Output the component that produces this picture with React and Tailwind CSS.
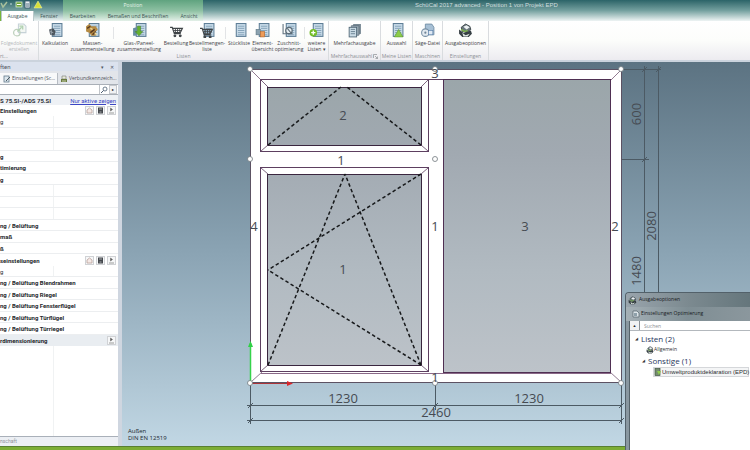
import React from 'react';

const Sheet = ({ faded }) => (
  <>
    <rect x="4" y="0.5" width="9" height="12" fill={faded ? '#f3f5f6' : '#c9dcea'} stroke={faded ? '#ccd3d6' : '#5f7f97'} />
    <path d="M5.5 3h6M5.5 5h6M5.5 7h6M5.5 9h6M5.5 11h6" stroke={faded ? '#dde' : '#7c9bb2'} strokeWidth="0.8" />
  </>
);

const Cart = () => (
  <g fill="none" stroke="#3f4447" strokeWidth="1.1">
    <path d="M1 4h2l2 6h6M3.5 5h9l-2 4h-6" />
    <path d="M6 5v4M8 5v4M10 5v4M4.5 7h7" strokeWidth="0.8" />
    <circle cx="5.5" cy="12" r="0.8" fill="#3f4447" />
    <circle cx="10.5" cy="12" r="0.8" fill="#3f4447" />
  </g>
);

const Printer = () => (
  <g>
    <path d="M3 4l4-3 4 2 1 3-3 2H4z" fill="#69777c" stroke="#353e42" strokeWidth="0.8" />
    <path d="M1 6l4 3 7-2 1 3-3 3H4L1 10z" fill="#363f43" />
    <path d="M5 3.500l3-1.500 3 2-3 2z" fill="#eef2f3" />
    <path d="M4 9l3 2.500 4-1.500-2 2.500H5z" fill="#dfe6e2" />
    <path d="M3 6l3 2 3-1" stroke="#7eb64a" strokeWidth="1.3" fill="none" />
  </g>
);

const icons = {
  doc: (
    <g opacity="0.65">
      <path d="M6 1h5l2 2v6H6z" fill="#eef4ee" stroke="#a9bcc4" />
      <circle cx="4.500" cy="9" r="3" fill="none" stroke="#9dbb9d" strokeWidth="1.200" />
      <path d="M5 8l4-4M7 3h3v3" fill="none" stroke="#87b987" strokeWidth="1.200" />
    </g>
  ),
  calc: (<g><Sheet /><path d="M1 6l4-1 2 3-1 4-4-1z" fill="#4b545c" /><path d="M2 8l3 1M3 6v5" stroke="#a8b4bb" strokeWidth="0.8" /></g>),
  mass: (<g><Sheet /><path d="M1 3l3-2 2 2 4 0 2 3-2 2 0 4-4 0-2-3-3-1z" fill="#b58b43" /><path d="M2 5l3-2M5 9l4-3M7 11l3-3" stroke="#573821" strokeWidth="1.300" /><path d="M5 5l2 1M9 9l2 2" stroke="#f1dc9f" strokeWidth="1.200" /></g>),
  glass: (<g><Sheet /><path d="M1 5l3-1v8H1z" fill="#668da2" /><path d="M5 3h3v5h2l-3.500 4L3 8h2z" fill="#66b22e" stroke="#3f7f22" strokeWidth="0.500" /></g>),
  cart: <Cart />,
  cartList: (<g><Sheet /><g transform="translate(-1 1)"><Cart /></g></g>),
  list: <Sheet />,
  element: (<g><Sheet /><rect x="1" y="6" width="4" height="5" fill="#8ba2b0" stroke="#5f7885" strokeWidth="0.600" /><rect x="5" y="8" width="4" height="5" fill="#ee9b57" stroke="#b66a2e" strokeWidth="0.600" /></g>),
  cut: (<g><Sheet /><path d="M1 1v9h9" fill="none" stroke="#60727f" /><circle cx="6.500" cy="7" r="3" fill="#e8f0f4" stroke="#5c6c77" strokeWidth="1.200" /><path d="M5 5l4 5" stroke="#5c6c77" /></g>),
  more: (<g><Sheet /><circle cx="4" cy="9" r="3.500" fill="#73bd28" /><path d="M4 7v4M2 9h4" stroke="#fff" strokeWidth="1.200" /></g>),
  multi: (<g><path d="M6 1h7v9l-2 1V3H5z" fill="#788994" /><path d="M4 2.500h7v9H4z" fill="#97a8b2" stroke="#566773" strokeWidth="0.600" /><rect x="2" y="4" width="7" height="9" fill="#cadbe5" stroke="#4d6474" strokeWidth="0.800" /><path d="M3.500 6h4M3.500 8h4M3.500 10h4" stroke="#627b8c" strokeWidth="0.800" /></g>),
  choose: (<g><Sheet /><path d="M9 6l4 7H5z" fill="#8ccc49" stroke="#579526" strokeWidth="0.500" /></g>),
  saw: (<g><path d="M5 1h6l2 3v7H5z" fill="#a7c0d5" stroke="#6e8ba3" strokeWidth="0.800" /><circle cx="5" cy="9" r="3.500" fill="#e2eaf0" stroke="#7890a5" /><circle cx="5" cy="9" r="1" fill="#6e8296" /><rect x="8" y="7" width="4" height="4" fill="#dfe9f3" stroke="#5a80ac" strokeWidth="0.600" /></g>),
  printer: <Printer />,
};

const Icon = ({ name, className }) => (
  <svg viewBox="0 0 14 14" className={className} aria-hidden="true">{icons[name]}</svg>
);

const groups = [
  { title: 'rt...', width: 'w-[39px]', left: true, items: [{ icon: 'doc', a: 'Folgedokument', b: 'erstellen', w: 'w-[38px]', faded: true }] },
  {
    title: 'Listen', width: 'w-[290px]', items: [
      { icon: 'calc', a: 'Kalkulation', w: 'w-[32px]' },
      { icon: 'mass', a: 'Massen-', b: 'zusammenstellung', w: 'w-[43px]', line: true },
      { icon: 'glass', a: 'Glas-/Paneel-', b: 'zusammenstellung', w: 'w-[50px]' },
      { icon: 'cart', a: 'Bestellung', w: 'w-[24px]' },
      { icon: 'cartList', a: 'Bestellmengen-', b: 'liste', w: 'w-[38px]', line: true },
      { icon: 'list', a: 'Stückliste', w: 'w-[26px]' },
      { icon: 'element', a: 'Element-', b: 'übersicht', w: 'w-[21px]' },
      { icon: 'cut', a: 'Zuschnitt-', b: 'optimierung', w: 'w-[32px]', line: true },
      { icon: 'more', a: 'weitere', b: 'Listen ▾', w: 'w-[23px]' },
    ],
  },
  { title: 'Mehrfachauswahl', width: 'w-[52px]', launch: true, items: [{ icon: 'multi', a: 'Mehrfachausgabe', w: 'w-[51px]' }] },
  { title: 'Meine Listen', width: 'w-[32px]', items: [{ icon: 'choose', a: 'Auswahl', w: 'w-[31px]' }] },
  { title: 'Maschinen', width: 'w-[30px]', items: [{ icon: 'saw', a: 'Säge-Datei', w: 'w-[29px]' }] },
  { title: 'Einstellungen', width: 'w-[46px]', items: [{ icon: 'printer', a: 'Ausgabeoptionen', w: 'w-[45px]' }] },
];

function TitleBar() {
  return (
    <header className="relative flex h-[21px] shrink-0 flex-col justify-between bg-linear-to-b from-[#2b6468] via-[#74a09f] to-[#eef4f4]">
      <div className="absolute inset-y-0 left-[63px] w-[140px] bg-linear-to-b from-[#5fa37f] via-[#8dc0a2] to-[#e3f0e8]" />
      <div className="relative flex h-[9px] items-center">
        <div className="flex w-[63px] items-center gap-1">
          <svg viewBox="0 0 44 9" className="h-[9px] w-[44px]" aria-hidden="true">
            <path d="M1 3l2 4 4-5" fill="none" stroke="#a8c09b" strokeWidth="1.500" />
            <path d="M10 4h2" stroke="#c4dada" />
            <rect x="16" y="2" width="6" height="5" fill="#6ca43a" stroke="#d9ead0" strokeWidth="0.800" />
            <path d="M17 4.500h4" stroke="#fff" />
            <rect x="25" y="1" width="5" height="7" fill="#e8eef1" stroke="#31516a" strokeWidth="0.800" />
            <path d="M26 4h3M26 6h3" stroke="#31516a" strokeWidth="0.800" />
            <path d="M38 1l4 7h-8z" fill="#d9df38" stroke="#f2f4b0" strokeWidth="0.500" />
          </svg>
        </div>
        <div className="w-[140px] text-center text-[5px] leading-[8px] text-[#e3f3e8]">Position</div>
        <div className="flex-1 pl-[212px] font-['Liberation_Sans',sans-serif] text-[6px] leading-[8px] whitespace-nowrap text-[#cfdedf]">SchüCal 2017 advanced - Position 1 von Projekt EPD</div>
      </div>
      <nav className="relative flex h-[10px] items-center text-[5px] leading-[10px] whitespace-nowrap text-[#3c5553]">
        <span className="h-full w-px bg-[#78b63a]" />
        <button className="h-full w-[33px] border-x border-[#b9c8ca] bg-white text-center">Ausgabe</button>
        <button className="w-[30px] text-center">Fenster</button>
        <button className="w-[37px] text-center">Bearbeiten</button>
        <button className="w-[74px] text-center">Bemaßen und Beschriften</button>
        <button className="w-[28px] text-center">Ansicht</button>
      </nav>
    </header>
  );
}

function Ribbon() {
  return (
    <div className="flex h-[39px] shrink-0 overflow-hidden bg-linear-to-b from-white via-[#fcfdfb] to-[#ecebf0]">
      {groups.map((g) => (
        <section key={g.title} className={`${g.width} flex shrink-0 flex-col border-r border-[#d9dcdf]`}>
          <div className="flex h-[31px]">
            {g.items.map((it) => (
              <button key={it.a} className={`${it.w} ${it.faded ? 'text-[#b4b8ba]' : 'text-[#3f4246]'} relative flex shrink-0 flex-col items-center pt-[2px] text-[5px] leading-[6px] whitespace-nowrap`}>
                <Icon name={it.icon} className="h-[15px] w-[15px] shrink-0" />
                <span className="mt-[2px] flex w-0 flex-col items-center">
                  <span>{it.a}</span>
                  {it.b && <span>{it.b}</span>}
                </span>
                {it.line && <span className="absolute top-[6px] right-0 h-[12px] w-px bg-[#e2e4e6]" />}
              </button>
            ))}
          </div>
          <div className={`${g.left ? '' : 'justify-center'} flex items-center gap-px text-[5px] leading-[8px] whitespace-nowrap text-[#8b8f94]`}>
            {g.title}
            {g.launch && (
              <svg viewBox="0 0 5 5" className="h-[5px] w-[5px] shrink-0" aria-hidden="true"><path d="M0.500 4V0.500H4M2 2l2.500 2.500M4.500 2.500v2h-2" fill="none" stroke="#8b8f94" strokeWidth="0.700" /></svg>
            )}
          </div>
        </section>
      ))}
    </div>
  );
}

const rows = [
  { t: 'Einstellungen', bold: true, tools: true },
  { t: 'g' },
  { t: '' },
  { t: '' },
  { t: 'g', bold: true },
  { t: 'timierung', bold: true },
  { t: 'g', bold: true },
  { t: '' },
  { t: '' },
  { t: '' },
  { t: 'ng / Belüftung', bold: true },
  { t: 'maß', bold: true },
  { t: 'ß', bold: true },
  { t: 'seinstellungen', bold: true, tools: true },
  { t: 'g' },
  { t: 'ng / Belüftung Blendrahmen', bold: true },
  { t: 'ng / Belüftung Riegel', bold: true },
  { t: 'ng / Belüftung Fensterflügel', bold: true },
  { t: 'ng / Belüftung Türflügel', bold: true },
  { t: 'ng / Belüftung Türriegel', bold: true },
  { t: 'rdimensionierung', bold: true, more: true },
];

const toolBtn = 'flex h-[9px] w-[9px] items-center justify-center border border-[#d0d2d5] bg-[#f6f7f8]';

function Arrow() {
  return (
    <svg viewBox="0 0 7 7" className="h-[7px] w-[7px]" aria-hidden="true">
      <path d="M2.500 1l2 1.500-2 1.500zM1 6h5" fill="#555" stroke="#777" strokeWidth="0.700" />
    </svg>
  );
}

function SidePanel() {
  return (
    <aside className="flex w-[122px] shrink-0 flex-col border-r-4 border-[#cfd6e0] bg-white font-['Roboto',sans-serif]">
      <div className="flex h-[9px] items-center justify-between bg-[#dbe2ee] pr-1 text-[6px] text-[#4e5563]">
        <span>ften</span>
        <span className="flex gap-[6px] text-[5px] leading-[8px]"><span>▾</span><span>✕</span></span>
      </div>
      <div className="flex h-[13px] items-end bg-[#e2e5ea] font-['Open_Sans',sans-serif] text-[5px] whitespace-nowrap text-[#4c5056]">
        <button className="flex h-[11px] w-[58px] items-center gap-px overflow-hidden border-r border-[#b7bcc3] bg-[#f8f9fa] pl-[3px]">
          <svg viewBox="0 0 8 8" className="h-2 w-2 shrink-0" aria-hidden="true"><rect x="1" y="1" width="5" height="6" fill="#dce6ed" stroke="#637b8c" strokeWidth="0.800" /><path d="M3 6l4-4" stroke="#4c5b63" /></svg>
          Einstellungen (Sc...
        </button>
        <button className="flex h-[11px] flex-1 items-center gap-px overflow-hidden pl-[2px]">
          <svg viewBox="0 0 8 8" className="h-2 w-2 shrink-0" aria-hidden="true"><path d="M2 1h4v3H2z" fill="#e9ecd8" stroke="#777" strokeWidth="0.600" /><path d="M1 4h6v3H1z" fill="#697a3f" /><path d="M2 6h4" stroke="#dfe6c5" strokeWidth="0.800" /></svg>
          Verbundkennzeich...
        </button>
      </div>
      <div className="flex h-[11px] items-center gap-px border-y border-[#a9afb7] bg-white pr-px">
        <input aria-label="Einstellungen suchen" className="h-full min-w-0 flex-1 bg-white text-[6px] outline-none" />
        <button aria-label="Suchen" className="flex h-full w-[9px] items-center justify-center border-l border-[#c1c5ca]">
          <svg viewBox="0 0 8 8" className="h-2 w-2" aria-hidden="true"><circle cx="5" cy="3" r="2" fill="none" stroke="#4d5f74" strokeWidth="0.800" /><path d="M3.500 4.500L1 7" stroke="#4d5f74" /></svg>
        </button>
        <button aria-label="Weiter" className="flex h-full w-2 items-center justify-center border border-[#c5c8cd] bg-[#f1f2f4] text-[4px] leading-none">▸</button>
      </div>
      <div className="flex h-[10px] items-center justify-between bg-[#eef1f5] pr-[2px] text-[6px] whitespace-nowrap">
        <span className="font-bold text-[#2e3238]">S 75.SI-/ADS 75.SI</span>
        <a href="#aktive" className="text-[#3b46c4] underline">Nur aktive zeigen</a>
      </div>
      <div className="flex flex-col">
        {rows.map((r, i) => (
          <div key={i} className={`${r.more ? 'bg-[#e9edf1]' : ''} ${r.tools || r.more ? '' : 'border-b border-[#eceef0]'} flex items-center justify-between pr-[2px] text-[6px] whitespace-nowrap text-[#26292d] odd:h-[11px] even:h-[12px]`}>
            <span className={r.bold ? 'font-bold' : 'flex h-full w-[54px] items-center border-r border-[#f0f2f3]'}>{r.t}</span>
            {r.tools && (
              <span className="flex gap-[2px]">
                <button aria-label="Zurücksetzen" className={toolBtn}><svg viewBox="0 0 7 7" className="h-[7px] w-[7px]" aria-hidden="true"><path d="M1 6V3l2.500-2L6 3v3z" fill="#f5e9e6" stroke="#b9a19b" strokeWidth="0.800" /></svg></button>
                <button aria-label="Speichern" className={toolBtn}><svg viewBox="0 0 7 7" className="h-[7px] w-[7px]" aria-hidden="true"><rect x="1" y="0.500" width="5" height="6" fill="#43464b" /><path d="M2 2h3M2.500 5h2" stroke="#c2c5c8" strokeWidth="0.800" /></svg></button>
                <button aria-label="Weiter" className={toolBtn}><Arrow /></button>
              </span>
            )}
            {r.more && <button aria-label="Weiter" className={toolBtn}><Arrow /></button>}
          </div>
        ))}
      </div>
      <div className="w-[54px] flex-1 border-r border-[#f0f2f3]" />
      <div className="h-[10px] border-t border-[#a9b0b9] bg-[#eceff4] text-[5px] leading-[9px] text-[#8d9299]">nschaft</div>
    </aside>
  );
}

const handles = [[250, 69], [435, 69], [621, 69], [250, 159], [435, 159], [250, 383], [435, 383], [621, 383]];
const bounds = { fill: 'none', stroke: '#5d3f60', strokeWidth: 1 };

function Drawing() {
  return (
    <svg viewBox="122 62 628 384" className="h-[384px] w-[628px] max-w-none shrink-0" role="img" aria-label="Fensterelement mit Bemaßung">
      <defs>
        <linearGradient id="glass" x1="0" y1="80" x2="0" y2="374" gradientUnits="userSpaceOnUse">
          <stop offset="0" stopColor="#9ba6aa" />
          <stop offset="0.25" stopColor="#a1a9b1" />
          <stop offset="0.65" stopColor="#b1bac1" />
          <stop offset="1" stopColor="#bdc3c9" />
        </linearGradient>
      </defs>
      <g stroke="#4c5a64" strokeWidth="1" fill="none">
        <path d="M621 69.500h40M621 159.500h28M644.500 66v317M658.500 66v317" />
        <path d="M250.500 383v41M435.500 383v27M621.500 383v41M247 405.500h375M247 420.500h375" />
        <path d="M642 72l5-5M656 72l5-5M642 162l5-5M248 408l5-5M248 423l5-5M433 408l5-5M619 408l5-5M619 423l5-5" />
      </g>
      <rect x="250.500" y="69.500" width="371" height="313" fill="#fff" stroke="#5c5263" />
      <path d="M251 70l11 11M621 70l-11 11M251 382l11-10M621 382l-11-10" stroke="#765a76" strokeWidth="0.800" />
      <path d="M261 373.500h350" stroke="#8a6988" />
      <g {...bounds}>
        <path d="M261 79.500h350" />
        <rect x="260.500" y="79.500" width="168" height="72" />
        <rect x="260.500" y="167.500" width="168" height="204" />
        <rect x="267.500" y="87.500" width="154" height="58" fill="url(#glass)" stroke="#3a263f" />
        <rect x="267.500" y="174.500" width="154" height="191" fill="url(#glass)" stroke="#3a263f" />
        <rect x="443.500" y="79.500" width="167" height="293" fill="url(#glass)" stroke="#4f2f52" />
        <path d="M261 80l7 7M428 80l-7 7M261 151l7-6M428 151l-7-6M261 168l7 6M428 168l-7 6M261 371l7-6M428 371l-7-6" strokeWidth="0.800" />
      </g>
      <g fill="none" stroke="#17191b" strokeWidth="1.500" strokeDasharray="3.500 2.500">
        <path d="M268 145L341 87M421 145L347 87" />
        <path d="M268 365L345 174M421 365L345 174M421 174L268 270M421 365L268 270" />
      </g>
      <path d="M250.500 383v-40" stroke="#35d34a" strokeWidth="1.500" />
      <path d="M248 347l2.500-6 2.500 6z" fill="#2fd045" />
      <path d="M251 383.500h38" stroke="#ab3439" />
      <path d="M287 381l6 2.500-6 2.500z" fill="#d9262b" />
      <g fill="#fff" stroke="#70787d" strokeWidth="0.800">
        {handles.map(([x, y]) => <circle key={`${x}-${y}`} cx={x} cy={y} r="2.500" />)}
      </g>
      <g className="text-[13px]" textAnchor="middle" fill="#464b52">
        <text x="343" y="120">2</text>
        <text x="341" y="165">1</text>
        <text x="343" y="274">1</text>
        <text x="525" y="231">3</text>
        <text x="254" y="231">4</text>
        <text x="435" y="231">1</text>
        <text x="615" y="231">2</text>
        <text x="435" y="78">3</text>
        <text x="435" y="382">1</text>
        <text x="343" y="403">1230</text>
        <text x="529" y="403">1230</text>
        <text x="436" y="417">2460</text>
        <text transform="translate(641 114) rotate(-90)">600</text>
        <text transform="translate(656 226) rotate(-90)">2080</text>
        <text transform="translate(641 271) rotate(-90)">1480</text>
      </g>
      <g className="text-[6px]" fill="#1c272f">
        <text x="128" y="433">Außen</text>
        <text x="128" y="440">DIN EN 12519</text>
      </g>
    </svg>
  );
}

function OptionsWindow() {
  return (
    <section className="absolute right-0 bottom-0 flex h-[158px] w-[125px] flex-col overflow-hidden rounded-tl border-t border-l border-[#53616a] bg-linear-to-r from-[#8997a0] to-[#9aa5ac]">
      <div className="flex h-[14px] shrink-0 items-center gap-[2px] bg-linear-to-r from-[#99a4ac] via-[#7c8a90] to-[#65767c] pl-[2px] text-[5px] text-[#16191c]">
        <Icon name="printer" className="h-[9px] w-[9px]" />Ausgabeoptionen
      </div>
      <div className="flex h-[14px] shrink-0 items-center gap-px bg-linear-to-r from-[#a5b0b6] via-[#7f8e94] to-[#8b979d] pl-[6px] text-[5px] text-[#16191c]">
        <svg viewBox="0 0 8 8" className="h-2 w-2" aria-hidden="true"><path d="M1 1h4l2 2v4H1z" fill="#dce4e8" stroke="#55636b" strokeWidth="0.700" /><path d="M2 3h3v3H2z" fill="#8ea0aa" /></svg>
        Einstellungen Optimierung
      </div>
      <div className="ml-[3px] flex flex-1 flex-col border-l border-[#56636a] bg-white text-[#2c2f33]">
        <div className="flex h-[10px] items-center border-b border-[#b3b8bd]">
          <button aria-label="Einklappen" className="flex h-full w-[10px] items-center justify-center border-r border-[#8b9298] bg-[#f1f2f4] text-[4px] leading-none">▲</button>
          <input aria-label="Suchen" placeholder="Suchen" className="h-full min-w-0 flex-1 bg-white pl-1 text-[5px] outline-none placeholder:text-[#8b8f94]" />
        </div>
        <ul className="flex flex-col pt-[2px] whitespace-nowrap">
          <li className="flex h-[12px] items-center gap-[3px] pl-[5px] text-[8px] text-[#26365c]"><span className="text-[4px] text-[#333]">◢</span>Listen (2)</li>
          <li className="flex h-[10px] items-center pl-[16px] text-[5px]"><Icon name="printer" className="h-2 w-2" />Allgemein</li>
          <li className="flex h-[12px] items-center gap-[3px] pl-[12px] text-[8px] text-[#26365c]"><span className="text-[4px] text-[#333]">◢</span>Sonstige (1)</li>
          <li className="mr-px ml-[23px] flex h-[10px] items-center border border-[#d5d7da] bg-[#f4f5f6] font-['Liberation_Sans',sans-serif] text-[6px]">
            <svg viewBox="0 0 8 8" className="h-2 w-2 shrink-0" aria-hidden="true"><rect x="1" y="0.500" width="5" height="7" fill="#758c6e" stroke="#3e5541" strokeWidth="0.700" /><path d="M3 3h4l-2 4z" fill="#8fcc4c" /></svg>
            Umweltproduktdeklaration (EPD)
          </li>
        </ul>
      </div>
    </section>
  );
}

export default function App() {
  return (
    <div className="relative flex min-h-screen flex-col overflow-hidden bg-[#cbd3dd] font-['Open_Sans','Noto_Sans',sans-serif]">
      <TitleBar />
      <Ribbon />
      <main className="mt-[2px] flex flex-1">
        <SidePanel />
        <div className="flex min-w-0 flex-1 overflow-hidden bg-linear-to-b from-[#5c7382] via-[#8ba4b4] to-[#c1d7e4]">
          <Drawing />
        </div>
      </main>
      <footer className="h-1 shrink-0 border-t border-[#587f32] bg-[#7cad35]" />
      <OptionsWindow />
    </div>
  );
}
